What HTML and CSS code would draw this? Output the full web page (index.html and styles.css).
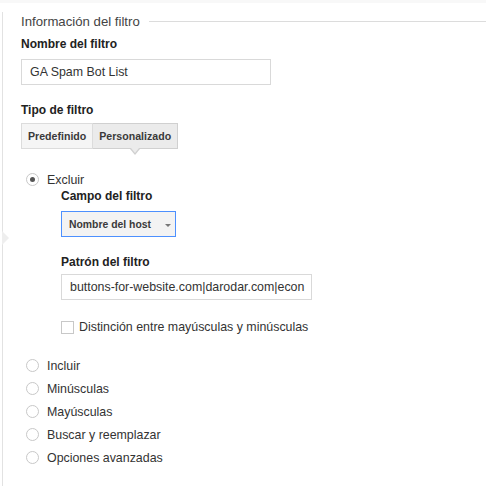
FILE: index.html
```html
<!DOCTYPE html>
<html lang="es">
<head>
<meta charset="utf-8">
<link rel="stylesheet" href="styles.css">
</head>
<body>
<div class="topband"></div>
<div class="panel">
  <span class="pointer"></span>
  <div class="legend"><span class="legend-text">Información del filtro</span><span class="legend-line"></span></div>

  <div class="label first">Nombre del filtro</div>
  <div class="input name-input">GA Spam Bot List</div>

  <div class="label type-label">Tipo de filtro</div>
  <div class="seg">
    <div class="seg-btn">Predefinido</div>
    <div class="seg-btn active">Personalizado</div>
  </div>

  <div class="radios">
    <div class="radio-row"><span class="radio checked"></span><span>Excluir</span></div>
    <div class="sub">
      <div class="label sub-label">Campo del filtro</div>
      <div class="dropdown"><span>Nombre del host</span><span class="caret"></span></div>
      <div class="label sub-label2">Patrón del filtro</div>
      <div class="input pattern-input"><span class="clip">buttons-for-website.com|darodar.com|econ</span></div>
      <div class="check-row"><span class="checkbox"></span><span>Distinción entre mayúsculas y minúsculas</span></div>
    </div>
    <div class="radio-list">
      <div class="radio-row"><span class="radio"></span><span>Incluir</span></div>
      <div class="radio-row"><span class="radio"></span><span>Minúsculas</span></div>
      <div class="radio-row"><span class="radio"></span><span>Mayúsculas</span></div>
      <div class="radio-row"><span class="radio"></span><span>Buscar y reemplazar</span></div>
      <div class="radio-row"><span class="radio"></span><span>Opciones avanzadas</span></div>
    </div>
  </div>
</div>
</body>
</html>
```

FILE: styles.css
```css
html, body {
  margin: 0;
  padding: 0;
  background: #fff;
  font-family: "Liberation Sans", Arial, sans-serif;
  color: #333;
  height: 486px;
  overflow: hidden;
}
.topband {
  height: 3px;
  background: #f8f8f8;
}
.panel {
  position: relative;
  margin-left: 2px;
  border-left: 1px solid #e2e2e2;
  padding-left: 18px;
  height: 483px;
  box-sizing: border-box;
}
.pointer {
  position: absolute;
  left: -1px;
  top: 219px;
  width: 0;
  height: 0;
  border-top: 7px solid transparent;
  border-bottom: 7px solid transparent;
  border-left: 7px solid #eeeeee;
}
.legend {
  display: flex;
  align-items: center;
  height: 18px;
  margin-top: 9px;
}
.legend-text {
  font-size: 13.2px;
  color: #444;
  white-space: nowrap;
}
.legend-line {
  flex: 1;
  height: 1px;
  background: #dcdcdc;
  margin-left: 9px;
}
.label {
  font-size: 12px;
  font-weight: bold;
  color: #222;
  line-height: 14px;
}
.first { margin-top: 7px; }
.input {
  border: 1px solid #d9d9d9;
  height: 26px;
  box-sizing: border-box;
  font-size: 12.4px;
  line-height: 24px;
  padding-left: 8px;
  color: #333;
  white-space: nowrap;
  overflow: hidden;
}
.name-input {
  width: 250px;
  margin-top: 8px;
}
.type-label { margin-top: 18px; }
.seg {
  display: flex;
  margin-top: 6px;
  position: relative;
}
.seg-btn {
  font-size: 10.6px;
  font-weight: bold;
  color: #3a3a3a;
  height: 26px;
  box-sizing: border-box;
  line-height: 24px;
  padding: 0 6px;
  background: #f5f5f5;
  border: 1px solid #dcdcdc;
}
.seg-btn + .seg-btn { border-left: none; }
.seg-btn.active {
  position: relative;
  background: #ebebeb;
  border-color: #d0d0d0;
}
.seg-btn.active::after {
  content: "";
  position: absolute;
  left: 50%;
  margin-left: -5px;
  top: 25px;
  border-left: 5px solid transparent;
  border-right: 5px solid transparent;
  border-top: 6px solid #d0d0d0;
}
.seg-btn.active::before {
  content: "";
  position: absolute;
  left: 50%;
  margin-left: -4px;
  top: 24px;
  border-left: 4px solid transparent;
  border-right: 4px solid transparent;
  border-top: 5px solid #ebebeb;
  z-index: 1;
}
.radios {
  margin-top: 19px;
  padding-left: 5px;
}
.radio-row {
  display: flex;
  align-items: center;
  height: 23px;
  font-size: 12.4px;
  color: #333;
}
.radio {
  width: 13px;
  height: 13px;
  box-sizing: border-box;
  border: 1px solid #c8c8c8;
  border-radius: 50%;
  margin-right: 8px;
  background: #fff;
  display: flex;
  align-items: center;
  justify-content: center;
}
.radio.checked::after {
  content: "";
  width: 5px;
  height: 5px;
  border-radius: 50%;
  background: #555;
}
.sub {
  padding-left: 35px;
}
.sub-label { margin-top: -2px; }
.dropdown {
  margin-top: 8px;
  width: 115px;
  height: 26px;
  box-sizing: border-box;
  border: 1px solid #4d90fe;
  background: #f3f3f3;
  display: flex;
  align-items: center;
  font-size: 10.4px;
  font-weight: bold;
  color: #3a3a3a;
  padding-left: 7px;
}
.caret {
  margin-left: 14px;
  margin-top: 3px;
  border-left: 3px solid transparent;
  border-right: 3px solid transparent;
  border-top: 3px solid #777;
}
.sub-label2 { margin-top: 18px; }
.pattern-input {
  margin-top: 5px;
  width: 251px;
  padding-right: 4px;
}
.clip {
  display: block;
  width: 240px;
  overflow: hidden;
  white-space: nowrap;
}
.check-row {
  display: flex;
  align-items: center;
  margin-top: 20px;
  font-size: 12.4px;
  color: #333;
}
.checkbox {
  width: 13px;
  height: 13px;
  box-sizing: border-box;
  border: 1px solid #c8c8c8;
  margin-right: 5px;
  margin-left: 0;
}
.radio-list {
  margin-top: 20px;
}
```
